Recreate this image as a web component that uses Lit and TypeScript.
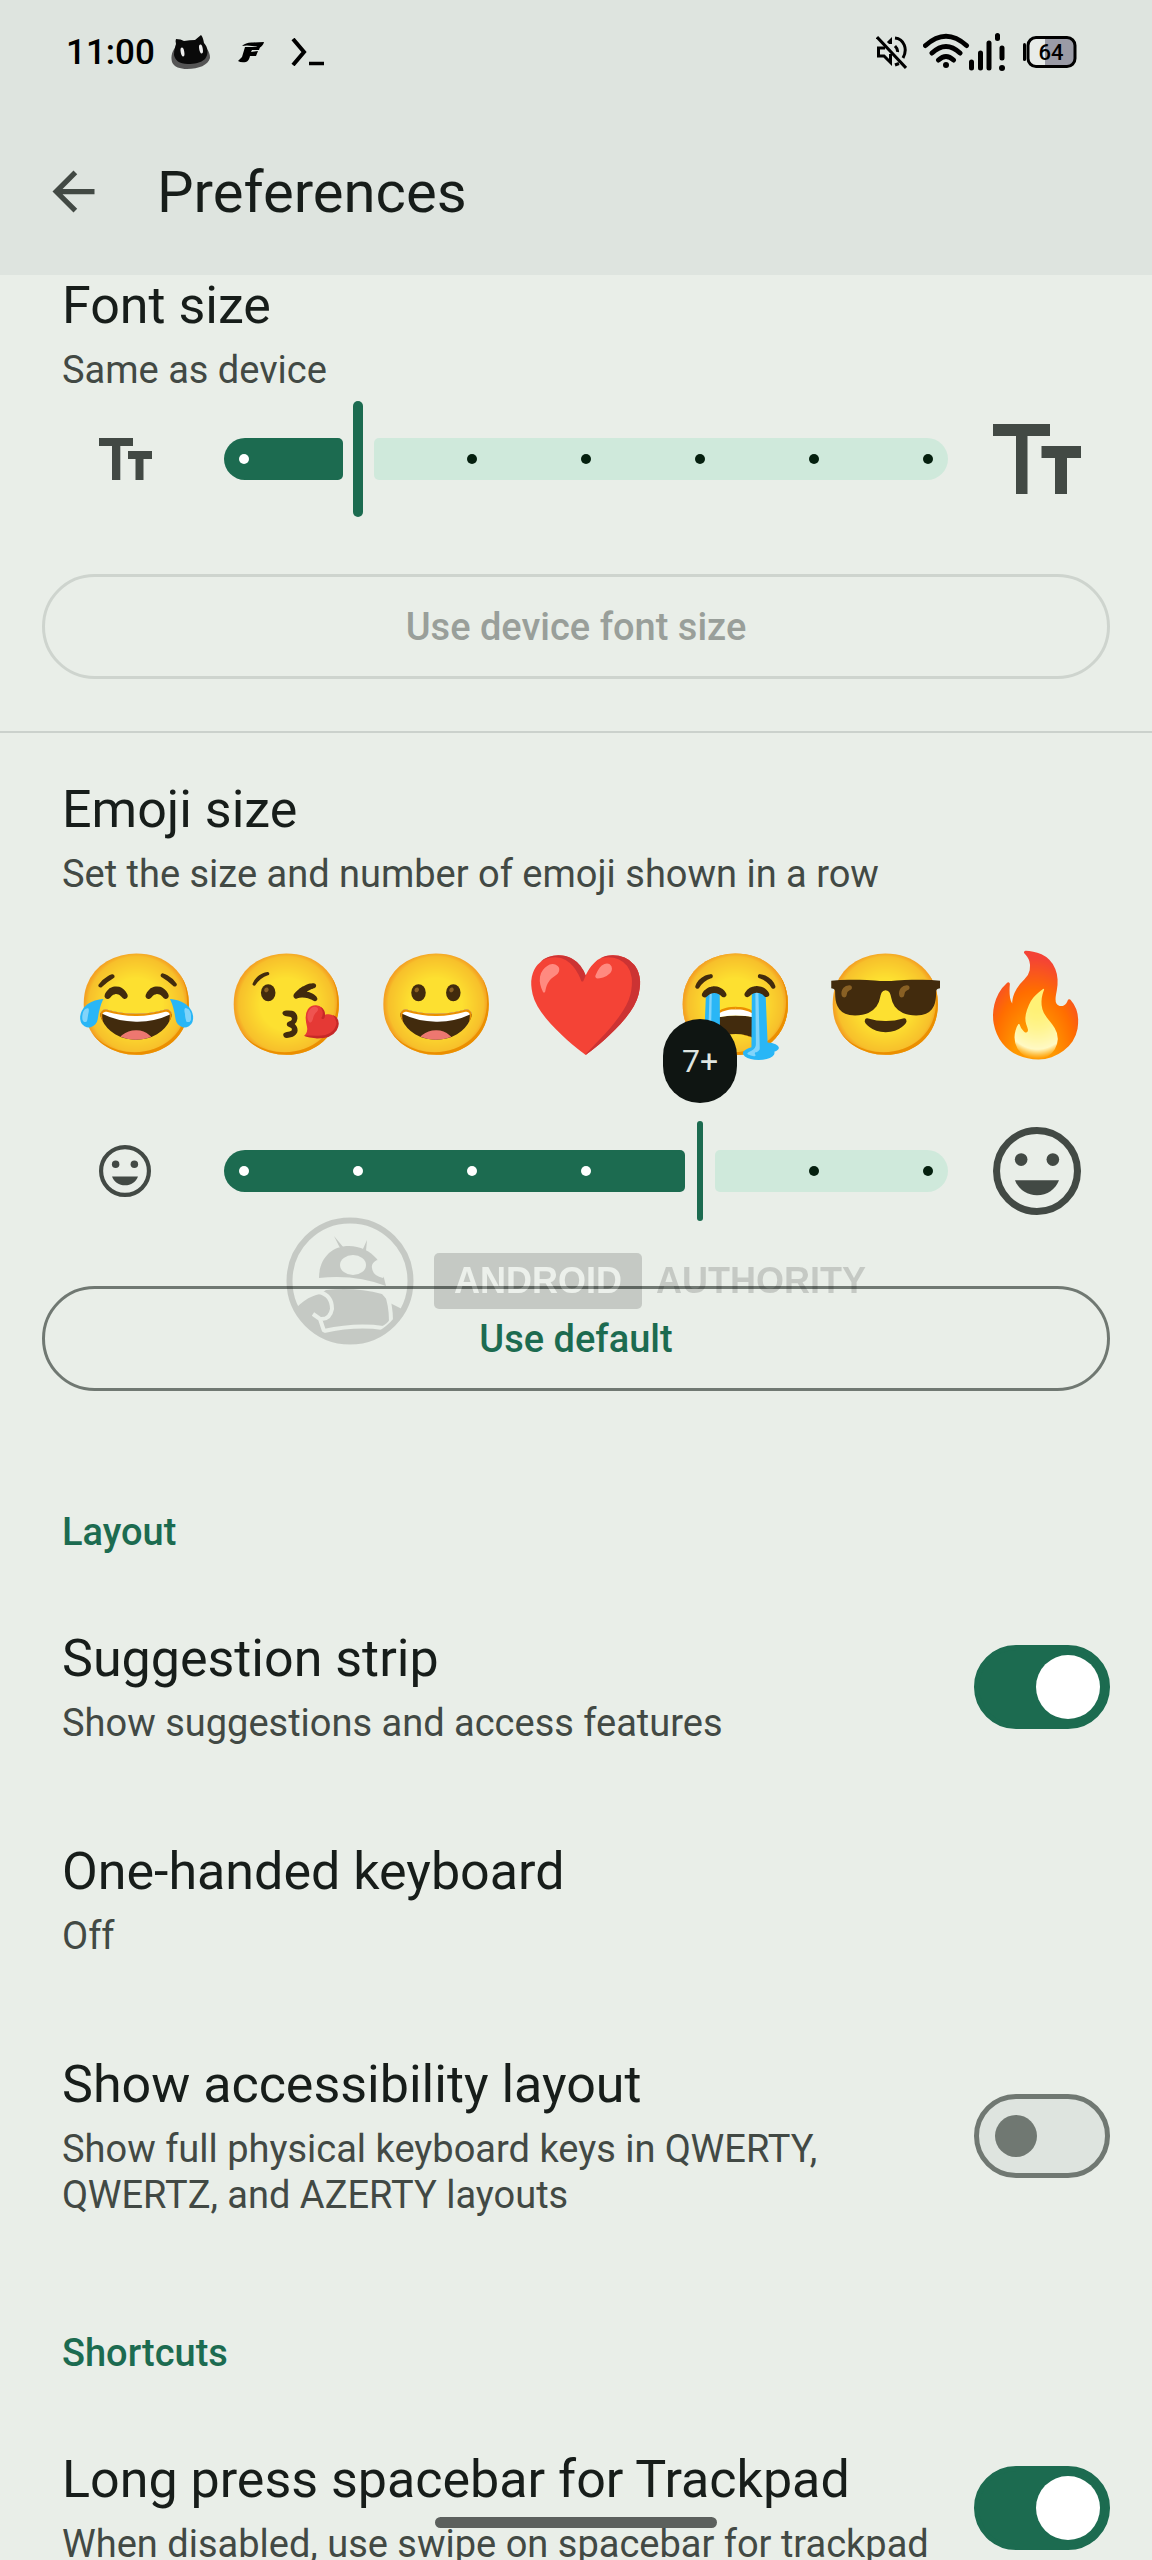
import { LitElement, html, css, svg, nothing } from "lit";
import { customElement, property, state } from "lit/decorators.js";

@customElement("stop-slider")
class StopSlider extends LitElement {
  @property() label = "";
  @property({ type: Number }) max = 6;
  @property({ type: Number }) value = 0;
  @property() tip = "";
  @property({ type: Boolean, reflect: true }) slim = false;

  static styles = css`
    :host {
      display: block;
      --edge: 20px;
    }
    .slider {
      position: relative;
      display: flex;
      align-items: center;
      height: 116px;
    }
    .active,
    .rest {
      height: 42px;
      box-sizing: border-box;
    }
    .active {
      flex: none;
      width: calc(var(--edge) + (100% - 2 * var(--edge)) * var(--ratio) - 15px);
      background: #1c6b50;
      border-radius: 21px 5px 5px 21px;
    }
    .handle {
      position: relative;
      flex: none;
      width: 10px;
      height: 116px;
      margin: 0 11px 0 10px;
      border-radius: 5px;
      background: #1c6b50;
    }
    :host([slim]) .handle {
      width: 6px;
      height: 100px;
      margin: 0 12px;
    }
    .rest {
      flex: 1;
      background: #cfe9db;
      border-radius: 5px 21px 21px 5px;
    }
    .stops {
      position: absolute;
      inset: 0;
      display: flex;
      align-items: center;
      justify-content: space-between;
      padding: 0 15px;
    }
    .dot {
      width: 10px;
      height: 10px;
      border-radius: 50%;
      background: #05200f;
    }
    .dot.on {
      background: #fff;
    }
    .dot.here {
      visibility: hidden;
    }
    input {
      position: absolute;
      inset: 0;
      width: 100%;
      height: 100%;
      margin: 0;
      opacity: 0;
      cursor: pointer;
    }
    .tip {
      position: absolute;
      left: 50%;
      bottom: 118px;
      transform: translateX(-50%);
      display: grid;
      place-items: center;
      width: 74px;
      height: 84px;
      border-radius: 37px;
      background: #0f1512;
      color: #dfe5e0;
      font-size: 32px;
    }
  `;

  render() {
    return html`
      <div class="slider" style="--ratio:${this.value / this.max}">
        <div class="active"></div>
        <div class="handle">
          ${this.tip ? html`<output class="tip">${this.tip}</output>` : nothing}
        </div>
        <div class="rest"></div>
        <div class="stops">
          ${Array.from({ length: this.max + 1 }, (_, i) => html`
            <span class="dot ${i < this.value ? "on" : i === this.value ? "here" : ""}"></span>`)}
        </div>
        <input type="range" min="0" max=${this.max} .value=${String(this.value)}
          aria-label=${this.label}
          @input=${(e: Event) => (this.value = Number((e.target as HTMLInputElement).value))} />
      </div>
    `;
  }
}

interface Pref {
  id: string;
  title: string;
  note: string;
  on?: boolean;
}

const layoutPrefs: Pref[] = [
  { id: "strip", title: "Suggestion strip", note: "Show suggestions and access features", on: true },
  { id: "onehand", title: "One-handed keyboard", note: "Off" },
  {
    id: "a11y",
    title: "Show accessibility layout",
    note: "Show full physical keyboard keys in QWERTY, QWERTZ, and AZERTY layouts",
    on: false,
  },
];
const shortcutPrefs: Pref[] = [
  {
    id: "trackpad",
    title: "Long press spacebar for Trackpad",
    note: "When disabled, use swipe on spacebar for trackpad",
    on: true,
  },
];
const emojis = ["😂", "😘", "😀", "❤️", "😭", "😎", "🔥"];

const face = svg`
  <circle cx="50" cy="50" r="46" fill="none" stroke="currentColor" stroke-width="8"/>
  <circle cx="32" cy="37" r="7.2"/><circle cx="68" cy="37" r="7.2"/>
  <path d="M25 60.500H75C71 71 61.500 77.500 50 77.500S29 71 25 60.500Z"/>`;

@customElement("app-root")
class AppRoot extends LitElement {
  @state() private prefs = { layoutPrefs, shortcutPrefs };

  static styles = css`
    :host {
      display: flex;
      flex-direction: column;
      height: 100vh;
      background: #e9eee8;
      color: #171d1a;
      font-family: Roboto, "Liberation Sans", sans-serif;
    }
    svg {
      display: block;
      flex: none;
      fill: currentColor;
    }
    .top {
      flex: none;
      background: #dee4df;
    }
    .status {
      display: flex;
      align-items: center;
      justify-content: space-between;
      height: 104px;
      padding: 0 75px 0 66px;
      color: #000;
      font-size: 35px;
      font-weight: 500;
    }
    .group {
      display: flex;
      align-items: center;
      gap: 16px;
    }
    .notices {
      gap: 27px;
    }
    .bar {
      display: flex;
      align-items: center;
      gap: 52px;
      height: 167px;
      padding: 4px 42px 0;
    }
    .back {
      padding: 0;
      border: 0;
      background: none;
      color: #424944;
    }
    h1 {
      margin: 0;
      font-size: 58px;
      line-height: 68px;
      font-weight: 400;
    }
    main {
      flex: 1;
      min-height: 0;
      overflow-y: auto;
      scrollbar-width: none;
    }
    .size {
      position: relative;
      padding: 0 42px 52px;
    }
    .size + .size {
      padding-top: 46px;
      padding-bottom: 54px;
      border-top: 2px solid #cbd1cc;
    }
    .intro {
      padding: 0 20px;
    }
    .title {
      margin: 0;
      font-size: 52px;
      line-height: 62px;
      font-weight: 400;
    }
    .note {
      margin: 10px 0 0;
      color: #424944;
      font-size: 38px;
      line-height: 46px;
    }
    .slide {
      display: grid;
      grid-template-columns: 166px 1fr 146px;
      gap: 16px;
      align-items: center;
      justify-items: center;
      color: #424944;
    }
    .slide stop-slider {
      justify-self: stretch;
    }
    .font .slide {
      margin-top: 8px;
    }
    .wide {
      display: block;
      width: 100%;
      height: 105px;
      margin-top: 57px;
      border: 3px solid #707872;
      border-radius: 53px;
      background: none;
      color: #1c6b50;
      font: 500 38px/46px Roboto, "Liberation Sans", sans-serif;
    }
    .wide:disabled {
      border-color: #ced4ce;
      color: #999f9a;
    }
    .emojis {
      display: grid;
      grid-template-columns: repeat(7, 1fr);
      align-items: center;
      justify-items: center;
      height: 216px;
      padding: 0 0 0 20px;
      font-size: 99px;
    }
    .mark {
      position: absolute;
      left: 50%;
      top: 484px;
      transform: translateX(-50%);
      display: flex;
      align-items: center;
      gap: 20px;
      opacity: 0.15;
      color: #000;
      font: 700 36px/56px "Liberation Sans", sans-serif;
      pointer-events: none;
    }
    .words {
      display: flex;
      gap: 14px;
    }
    .plate {
      padding: 0 20px;
      border-radius: 5px;
      background: #000;
      color: #fff;
    }
    h2 {
      margin: 0;
      padding: 64px 62px 26px;
      color: #1c6b50;
      font-size: 38px;
      line-height: 46px;
      font-weight: 500;
    }
    .row {
      display: flex;
      align-items: center;
      justify-content: space-between;
      gap: 44px;
      padding: 47px 42px 48px 62px;
    }
    .switch {
      appearance: none;
      flex: none;
      display: flex;
      align-items: center;
      box-sizing: border-box;
      width: 136px;
      height: 84px;
      margin: 0;
      padding: 0 16px;
      border: 5px solid #707872;
      border-radius: 42px;
      background: #dee4df;
    }
    .switch::before {
      content: "";
      width: 42px;
      height: 42px;
      border-radius: 50%;
      background: #707872;
    }
    .switch:checked {
      justify-content: flex-end;
      padding: 0 5px;
      border-color: #1c6b50;
      background: #1c6b50;
    }
    .switch:checked::before {
      width: 64px;
      height: 64px;
      background: #fff;
    }
    .pill {
      position: fixed;
      left: 50%;
      bottom: 32px;
      transform: translateX(-50%);
      width: 282px;
      height: 11px;
      border-radius: 6px;
      background: #5c605d;
    }
  `;

  private row(p: Pref) {
    return html`
      <div class="row">
        <label for=${p.id}>
          <div class="title">${p.title}</div>
          <div class="note">${p.note}</div>
        </label>
        ${p.on === undefined
          ? nothing
          : html`<input class="switch" type="checkbox" role="switch" id=${p.id} ?checked=${p.on} />`}
      </div>
    `;
  }

  render() {
    return html`
      <header class="top">
        <div class="status">
          <div class="group notices">
            <div class="group">
              <span>11:00</span>
              <svg width="40" height="34" viewBox="0 0 40 34">
                <path d="M4 13C0 18 0 23 1 27c2 5 8 7 15 7 12 0 21-4 23-11 0-4-1-6-3-9Z" fill="#555"/>
                <path d="M5 4Q10 4 13 6q6-1 11-1L30 0q2 2 3 8c4 4 5 11 1 16-4 4-11 5-17 5C8 29 4 25 3 20 3 15 4 12 5 9Q4 6 5 4Z" fill="#0a0a0a"/>
                <ellipse cx="11.500" cy="17" rx="1.800" ry="4.500" fill="#eee" transform="rotate(-10 11.500 17)"/>
                <ellipse cx="30" cy="14" rx="1.800" ry="4.500" fill="#eee" transform="rotate(-10 30 14)"/>
              </svg>
            </div>
            <svg width="26" height="21" viewBox="0 0 26 21">
              <path d="M4 4Q8 0 15 .5L26 0Q25 4 21 6Q19 4 14 4Q9 3 4 4Z"/>
              <path d="M7 5H22L21 8H14L13 10L20 9L18 14L12 14Q11 19 8 20Q3 21 0 19L4 15Z"/>
            </svg>
            <svg width="34" height="28" viewBox="0 0 34 28" fill="none" stroke="currentColor" stroke-width="4">
              <path d="M2 1L13 14L2 27" fill="none"/><path d="M18 25.500H33" stroke-width="3.500"/>
            </svg>
          </div>
          <div class="group">
            <svg width="31" height="34" viewBox="0 0 31 34" fill="none" stroke="currentColor" stroke-width="3">
              <path d="M1 2L30 33"/>
              <path d="M9 13H2.500V21H8L14.500 27.500V19" fill="none"/>
              <path d="M12 8L14.500 5.500V9M19 3C28 4 32 14 27 23M19 11Q22 14 21.500 17M19 30L23 28.500" fill="none"/>
            </svg>
            <svg width="84" height="38" viewBox="0 0 84 38" fill="none" stroke="currentColor" stroke-width="5" stroke-linecap="round">
              <path d="M2.500 12.500Q23 -6 43.500 12.500M9 20Q23 7 37 20M15.500 27Q23 20 30.500 27" fill="none"/>
              <circle cx="23" cy="32" r="3" fill="currentColor" stroke="none"/>
              <path d="M48.500 29V35M57.500 20V35M66 10V35M74.500 2.500V5.500M79 15V25" />
              <circle cx="79" cy="35" r="3" fill="currentColor" stroke="none"/>
            </svg>
            <svg width="54" height="32" viewBox="0 0 54 32">
              <rect x="0" y="7" width="3" height="18" rx="1.500"/>
              <rect x="5" y="1.500" width="47" height="29" rx="8" fill="#9a9ba6"/>
              <path d="M12 2H22V30H12Q6 30 6 23V9Q6 2 12 2Z" fill="#e8ece9"/>
              <rect x="5" y="1.500" width="47" height="29" rx="8" fill="none" stroke="currentColor" stroke-width="3"/>
              <text x="28" y="24" text-anchor="middle" font-size="22" font-weight="500">64</text>
            </svg>
          </div>
        </div>
        <div class="bar">
          <button class="back" aria-label="Back">
            <svg width="63" height="63" viewBox="0 0 24 24"><path d="M20 11H7.830l5.590-5.590L12 4l-8 8 8 8 1.410-1.410L7.830 13H20v-2z"/></svg>
          </button>
          <h1>Preferences</h1>
        </div>
      </header>

      <main>
        <section class="size font">
          <div class="intro">
            <div class="title">Font size</div>
            <p class="note">Same as device</p>
          </div>
          <div class="slide">
            <svg width="53" height="42" viewBox="0 0 53 42"><path d="M0 0H34V8H21.300V42H13V8H0ZM29 13H53V21H44.500V42H36.500V21H29Z"/></svg>
            <stop-slider label="Font size" .value=${1}></stop-slider>
            <svg width="88" height="70" viewBox="0 0 88 70"><path d="M0 0H57V12H34.500V70H23V12H0ZM48.500 22H88V34H74V70H62V34H48.500Z"/></svg>
          </div>
          <button class="wide" disabled>Use device font size</button>
        </section>

        <section class="size">
          <div class="intro">
            <div class="title">Emoji size</div>
            <p class="note">Set the size and number of emoji shown in a row</p>
          </div>
          <div class="emojis">${emojis.map((e) => html`<span>${e}</span>`)}</div>
          <div class="slide">
            <svg width="52" height="52" viewBox="0 0 100 100">${face}</svg>
            <stop-slider label="Emoji size" slim tip="7+" .value=${4}></stop-slider>
            <svg width="88" height="88" viewBox="0 0 100 100">${face}</svg>
          </div>
          <button class="wide">Use default</button>
          <div class="mark">
            <svg width="128" height="128" viewBox="0 0 128 128">
              <defs>
                <clipPath id="disc"><circle cx="64" cy="64" r="61"/></clipPath>
                <mask id="cuts">
                  <rect width="128" height="128" fill="#fff"/>
                  <ellipse cx="67" cy="48" rx="13" ry="10" fill="#000"/>
                  <path d="M91 43Q85 46 86 51Q87 59 97 61L104 48Z" fill="#000"/>
                  <path d="M33 75Q46 78 46 92Q44 103 34 102L27 97M34 102L38 114Q70 107 97 111Q103 108 105 104Q105 88 100 75" fill="none" stroke="#000" stroke-width="4"/>
                </mask>
              </defs>
              <circle cx="64" cy="64" r="60.500" fill="none" stroke="currentColor" stroke-width="6"/>
              <g mask="url(#cuts)">
                <path d="M33 61C33 42 45 29 63 29C74 29 84 34 91 42L98 61L100 69Q69 57 33 61ZM48 19L58 31H54ZM81 23L80 34H76Z"/>
                <path clip-path="url(#disc)" d="M4 98Q18 80 34 77L40 73Q70 70 96 77L104 86L120 94V128H4Z"/>
              </g>
            </svg>
            <div class="words"><span class="plate">ANDROID</span><span>AUTHORITY</span></div>
          </div>
        </section>

        <h2>Layout</h2>
        ${this.prefs.layoutPrefs.map((p) => this.row(p))}
        <h2>Shortcuts</h2>
        ${this.prefs.shortcutPrefs.map((p) => this.row(p))}
      </main>
      <div class="pill"></div>
    `;
  }
}
